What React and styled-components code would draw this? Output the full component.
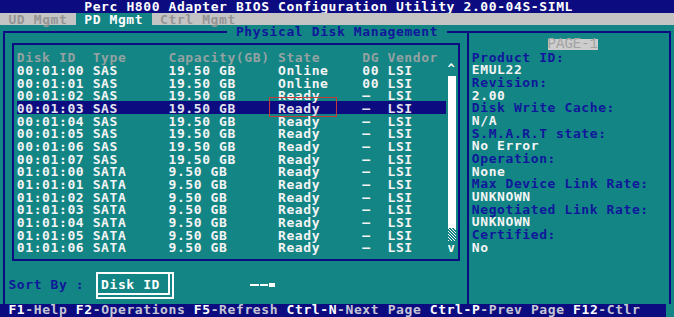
import React from "react";
import styled, { createGlobalStyle } from "styled-components";

const C = 8.425; // character cell width
const R = 12.68; // character cell height
const TEAL = "#138585";
const NAVY = "#0c0c80";
const LABEL = "#10189a";
const WHITE = "#f4f4f4";
const DIM = "#94a2a2";
const GRAY = "#c4c4c4";

const GlobalStyle = createGlobalStyle`
  html, body { margin: 0; padding: 0; background: ${TEAL}; }
  * { box-sizing: border-box; }
`;

const Screen = styled.div`
  width: 674px;
  height: 317px;
  overflow: hidden;
  display: flex;
  flex-direction: column;
  background: ${TEAL};
  font-family: "DejaVu Sans Mono", "Liberation Mono", monospace;
  font-weight: bold;
  font-size: 13px;
  letter-spacing: 0.6px;
  line-height: ${R}px;
  white-space: pre;
  color: ${WHITE};
`;

const TitleBar = styled.div`
  height: ${R}px;
  flex: none;
  background: ${NAVY};
  color: #ffffff;
  padding-left: ${10 * C}px;
  padding-top: 0.5px;
`;

const TabBar = styled.div`
  height: ${R}px;
  flex: none;
  display: flex;
  background: ${GRAY};
`;

const Tab = styled.div`
  padding: 1px ${C}px 0;
  background: ${(p) => (p.$active ? TEAL : "transparent")};
  color: ${(p) => (p.$active ? "#ffffff" : "#949494")};
  width: ${(p) => p.$cols * C}px;
`;

const Body = styled.div`
  height: ${22 * R}px;
  flex: none;
  display: flex;
  padding-top: ${R / 2 - 1}px;
  padding-left: ${C / 2 - 1}px;
`;

const OuterFrame = styled.div`
  position: relative;
  width: ${79 * C + C / 2 + 1 - (C / 2 - 1)}px;
  height: ${22 * R - (R / 2 - 1)}px;
  border: 2px solid ${NAVY};
  border-bottom: none;
  display: flex;
`;

const FrameTitle = styled.div`
  position: absolute;
  top: ${2 * R - (2 * R + R / 2 + 1) + 1}px;
  left: ${27 * C - (C / 2 + 1)}px;
  background: ${TEAL};
  color: ${LABEL};
  width: ${26 * C}px;
  height: ${R - 1}px;
`;

const LeftPane = styled.div`
  width: ${55 * C + C / 2 - 1 - (C / 2 + 1)}px;
  display: flex;
  flex-direction: column;
`;

const InnerBox = styled.div`
  margin-top: ${3 * R + R / 2 - 1 - (2 * R + R / 2 + 1)}px;
  margin-left: ${C + C / 2 - 1 - (C / 2 + 1)}px;
  width: ${54 * C + C / 2 + 1 - (C + C / 2 - 1)}px;
  height: ${20 * R + R / 2 + 1 - (3 * R + R / 2 - 1)}px;
  border: 2px solid ${NAVY};
  padding-top: ${4 * R - (3 * R + R / 2 + 1)}px;
  padding-left: ${2 * C - (C + C / 2 + 1)}px;
`;

const COLS = `${9 * C}px ${9 * C}px ${13 * C}px ${10 * C}px ${3 * C}px ${7 * C}px`;

const HeaderRow = styled.div`
  display: grid;
  grid-template-columns: ${COLS};
  height: ${R}px;
  color: ${DIM};
`;

const TableBody = styled.div`
  display: flex;
`;

const Rows = styled.div`
  display: flex;
  flex-direction: column;
`;

const DataRow = styled.div`
  display: grid;
  grid-template-columns: ${COLS};
  height: ${R}px;
  background: ${(p) => (p.$selected ? NAVY : "transparent")};
  color: ${(p) => (p.$selected ? "#e4e4f0" : WHITE)};
`;

const Cell = styled.div`
  position: relative;
  height: ${R}px;
  padding-top: 1.5px;
`;

const Mark = styled.div`
  position: absolute;
  left: -9px;
  top: -4.5px;
  width: 68px;
  height: 20px;
  border: 1.5px solid #c23a3a;
`;

const ScrollBar = styled.div`
  width: ${C}px;
  display: flex;
  flex-direction: column;
`;

const Arrow = styled.div`
  height: ${R}px;
  padding-left: 1px;
  padding-top: ${(p) => (p.$down ? 1 : 0)}px;
  color: #ffffff;
  font-size: 12px;
`;

const Thumb = styled.div`
  margin-left: 1.5px;
  width: 8px;
  height: ${(p) => p.$rows * R}px;
  background: ${(p) =>
    p.$hatched
      ? `repeating-linear-gradient(45deg, #ffffff 0 1px, ${TEAL} 1px 2.2px)`
      : "#ffffff"};
`;

const SortRow = styled.div`
  margin-top: ${21 * R + R / 2 - 1 - (20 * R + R / 2 + 1)}px;
  display: flex;
  align-items: center;
  height: ${2 * R + 2}px;
`;

const SortLabel = styled.div`
  margin-left: ${C - (C / 2 + 1)}px;
  width: ${11 * C + C / 2 - 1 - C}px;
  color: ${LABEL};
`;

const SortBox = styled.div`
  width: ${20 * C + C / 2 + 1 - (11 * C + C / 2 - 1)}px;
  height: 100%;
  border: 2px solid #ffffff;
  box-shadow: inset -2px -2px 0 ${TEAL}, inset -4px -4px 0 #ffffff;
  padding-left: ${12 * C - (11 * C + C / 2 + 1)}px;
  display: flex;
  align-items: center;
  color: #ffffff;
`;

const Slider = styled.div`
  margin-left: ${250 - (20 * C + C / 2 + 1)}px;
  display: flex;
  align-items: center;
  gap: 1px;
`;

const SliderDash = styled.div`
  width: ${(p) => p.$w}px;
  height: 2px;
  background: #ffffff;
`;

const SliderKnob = styled.div`
  width: 6px;
  height: 4px;
  background: #ffffff;
`;

const RightPane = styled.div`
  flex: 1;
  border-left: 2px solid ${NAVY};
  padding-top: ${3 * R - (2 * R + R / 2 + 1)}px;
  padding-left: ${56 * C - (55 * C + C / 2 + 1)}px;
  display: flex;
  flex-direction: column;
`;

const PageRow = styled.div`
  height: ${R}px;
  display: flex;
  align-items: center;
  padding-left: ${9 * C}px;
`;

const PageTag = styled.div`
  height: 11px;
  line-height: 11px;
  background: #cdcdcd;
  color: #a2a2a2;
  font-family: "Liberation Mono", monospace;
  font-weight: normal;
  font-size: 14px;
  letter-spacing: 0;
  width: ${6 * C}px;
  margin-top: 1px;
`;

const InfoLine = styled.div`
  height: ${R}px;
  padding-top: 1px;
  color: ${(p) => (p.$label ? LABEL : WHITE)};
`;

const Footer = styled.div`
  height: ${R}px;
  flex: none;
  width: ${79 * C}px;
  background: ${NAVY};
  padding-left: ${C}px;
  color: #c6c6d4;
`;

const Key = styled.span`
  color: #ffffff;
`;

const DASH = "\u2014";

const disks = [
  ["00:01:00", "SAS", "19.50 GB", "Online", "00"],
  ["00:01:01", "SAS", "19.50 GB", "Online", "00"],
  ["00:01:02", "SAS", "19.50 GB", "Ready", DASH],
  ["00:01:03", "SAS", "19.50 GB", "Ready", DASH],
  ["00:01:04", "SAS", "19.50 GB", "Ready", DASH],
  ["00:01:05", "SAS", "19.50 GB", "Ready", DASH],
  ["00:01:06", "SAS", "19.50 GB", "Ready", DASH],
  ["00:01:07", "SAS", "19.50 GB", "Ready", DASH],
  ["01:01:00", "SATA", "9.50 GB", "Ready", DASH],
  ["01:01:01", "SATA", "9.50 GB", "Ready", DASH],
  ["01:01:02", "SATA", "9.50 GB", "Ready", DASH],
  ["01:01:03", "SATA", "9.50 GB", "Ready", DASH],
  ["01:01:04", "SATA", "9.50 GB", "Ready", DASH],
  ["01:01:05", "SATA", "9.50 GB", "Ready", DASH],
  ["01:01:06", "SATA", "9.50 GB", "Ready", DASH],
];

const info = [
  ["Product ID:", "EMUL22"],
  ["Revision:", "2.00"],
  ["Disk Write Cache:", "N/A"],
  ["S.M.A.R.T state:", "No Error"],
  ["Operation:", "None"],
  ["Max Device Link Rate:", "UNKNOWN"],
  ["Negotiated Link Rate:", "UNKNOWN"],
  ["Certified:", "No"],
];

const keys = [
  ["F1", "-Help "],
  ["F2", "-Operations "],
  ["F5", "-Refresh "],
  ["Ctrl-N", "-Next Page "],
  ["Ctrl-P", "-Prev Page "],
  ["F12", "-Ctlr"],
];

export default function App() {
  return (
    <>
      <GlobalStyle />
      <Screen>
        <TitleBar>Perc H800 Adapter BIOS Configuration Utility 2.00-04S-SIML</TitleBar>
        <TabBar>
          <Tab $cols={9}>UD Mgmt</Tab>
          <Tab $cols={9} $active>PD Mgmt</Tab>
          <Tab $cols={11}>Ctrl Mgmt</Tab>
        </TabBar>
        <Body>
          <OuterFrame>
            <FrameTitle> Physical Disk Management </FrameTitle>
            <LeftPane>
              <InnerBox>
                <HeaderRow>
                  <Cell>Disk ID</Cell>
                  <Cell>Type</Cell>
                  <Cell>Capacity(GB)</Cell>
                  <Cell>State</Cell>
                  <Cell>DG</Cell>
                  <Cell>Vendor</Cell>
                </HeaderRow>
                <TableBody>
                  <Rows>
                    {disks.map((d, i) => (
                      <DataRow key={d[0]} $selected={i === 3}>
                        <Cell>{d[0]}</Cell>
                        <Cell>{d[1]}</Cell>
                        <Cell>{d[2]}</Cell>
                        <Cell>
                          {d[3]}
                          {i === 3 && <Mark />}
                        </Cell>
                        <Cell>{d[4]}</Cell>
                        <Cell>LSI</Cell>
                      </DataRow>
                    ))}
                  </Rows>
                  <ScrollBar>
                    <Arrow>^</Arrow>
                    <Thumb $rows={12} />
                    <Thumb $rows={1} $hatched />
                    <Arrow $down>v</Arrow>
                  </ScrollBar>
                </TableBody>
              </InnerBox>
              <SortRow>
                <SortLabel>Sort By :</SortLabel>
                <SortBox>Disk ID</SortBox>
                <Slider>
                  <SliderDash $w={9} />
                  <SliderDash $w={8} />
                  <SliderKnob />
                </Slider>
              </SortRow>
            </LeftPane>
            <RightPane>
              <PageRow>
                <PageTag>PAGE-1</PageTag>
              </PageRow>
              {info.map(([label, value]) => (
                <React.Fragment key={label}>
                  <InfoLine $label>{label}</InfoLine>
                  <InfoLine>{value}</InfoLine>
                </React.Fragment>
              ))}
            </RightPane>
          </OuterFrame>
        </Body>
        <Footer>
          {keys.map(([k, d]) => (
            <React.Fragment key={k}>
              <Key>{k}</Key>
              {d}
            </React.Fragment>
          ))}
        </Footer>
      </Screen>
    </>
  );
}
